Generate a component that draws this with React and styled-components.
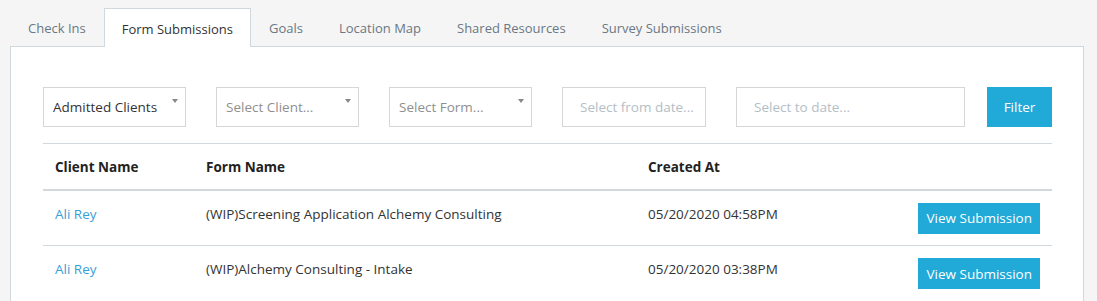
import styled, { createGlobalStyle } from 'styled-components'

const GlobalStyle = createGlobalStyle`
  html, body {
    margin: 0;
    background: #f5f5f5;
    font-family: 'Open Sans', 'Noto Sans', sans-serif;
    font-size: 13.5px;
    color: #333;
  }
`

const tabs = ['Check Ins', 'Form Submissions', 'Goals', 'Location Map', 'Shared Resources', 'Survey Submissions']

const rows = [
  { client: 'Ali Rey', form: '(WIP)Screening Application Alchemy Consulting', created: '05/20/2020 04:58PM' },
  { client: 'Ali Rey', form: '(WIP)Alchemy Consulting - Intake', created: '05/20/2020 03:38PM' },
]

const App = () => {
  return (
    <>
      <GlobalStyle />
      <Page>
        <TabBar>
          {tabs.map((t) => (
            <Tab key={t} active={t === 'Form Submissions'}>{t}</Tab>
          ))}
        </TabBar>
        <Panel>
          <Filters>
            <SelectBox width='143px' filled>Admitted Clients<Caret /></SelectBox>
            <SelectBox width='143px'>Select Client...<Caret /></SelectBox>
            <SelectBox width='143px'>Select Form...<Caret /></SelectBox>
            <DateBox width='144px'>Select from date...</DateBox>
            <DateBox width='229px'>Select to date...</DateBox>
            <FilterBtn>Filter</FilterBtn>
          </Filters>
          <Table>
            <thead>
              <tr>
                <Th width='151px'>Client Name</Th>
                <Th width='442px'>Form Name</Th>
                <Th>Created At</Th>
                <Th width='160px' />
              </tr>
            </thead>
            <tbody>
              {rows.map((r, i) => (
                <tr key={i}>
                  <Td><ClientLink>{r.client}</ClientLink></Td>
                  <Td>{r.form}</Td>
                  <Td>{r.created}</Td>
                  <Td align='right'><ViewBtn>View Submission</ViewBtn></Td>
                </tr>
              ))}
            </tbody>
          </Table>
        </Panel>
      </Page>
    </>
  )
}

export default App

const Page = styled.div`
  padding: 8px 13px 0 10px;
  height: 301px;
  box-sizing: border-box;
  overflow: hidden;
`

const TabBar = styled.div`
  display: flex;
  height: 38px;
`

const Tab = styled.div`
  display: flex;
  align-items: center;
  padding: 1px 17px 0;
  font-size: 13px;
  box-sizing: border-box;
  color: ${(p) => (p.active ? '#333' : '#6a7884')};
  background: ${(p) => (p.active ? '#fff' : 'transparent')};
  border: 1px solid ${(p) => (p.active ? '#cfd8dd' : 'transparent')};
  border-bottom: none;
  position: relative;
  z-index: 1;
  height: ${(p) => (p.active ? '39px' : '38px')};
`

const Panel = styled.div`
  background: #fff;
  border: 1px solid #cfd8dd;
  padding: 40px 31px 0 32px;
  height: 300px;
  box-sizing: border-box;
`

const Filters = styled.div`
  display: flex;
  gap: 30px;
  height: 40px;
  margin-bottom: 16px;
`

const fieldBase = `
  box-sizing: border-box;
  height: 40px;
  border: 1px solid #d6d6d6;
  display: flex;
  align-items: center;
  font-size: 13.5px;
  position: relative;
  white-space: nowrap;
`

const SelectBox = styled.div`
  ${fieldBase}
  width: ${(p) => p.width};
  padding-left: 9px;
  color: ${(p) => (p.filled ? '#333' : '#8f8f8f')};
`

const Caret = styled.span`
  position: absolute;
  right: 7px;
  top: 11px;
  width: 0;
  height: 0;
  border-left: 3.5px solid transparent;
  border-right: 3.5px solid transparent;
  border-top: 4px solid #888;
`

const DateBox = styled.div`
  ${fieldBase}
  width: ${(p) => p.width};
  padding-left: 17px;
  color: #b3bec6;
`

const FilterBtn = styled.button`
  margin-left: -8px;
  width: 65px;
  height: 40px;
  border: none;
  background: #21a9d8;
  color: #fff;
  font-family: inherit;
  font-size: 13.5px;
`

const Table = styled.table`
  width: 1009px;
  table-layout: fixed;
  border-collapse: collapse;
  border-top: 1px solid #d2d9de;
  font-size: 13.5px;

  tbody tr {
    border-top: 1px solid #d2d9de;
    height: 56px;
  }
  tbody tr:first-child {
    border-top: 2px solid #d2d9de;
  }
`

const Th = styled.th`
  box-sizing: border-box;
  text-align: left;
  font-weight: 700;
  color: #222;
  padding: 1px 12px 0;
  height: 46px;
  width: ${(p) => p.width || 'auto'};
`

const Td = styled.td`
  padding: 13px 12px 0;
  text-align: ${(p) => p.align || 'left'};
  vertical-align: top;
  line-height: 20px;
  color: #333;
`

const ClientLink = styled.a`
  color: #3a9fd6;
  text-decoration: none;
`

const ViewBtn = styled.button`
  background: #21a9d8;
  color: #fff;
  border: none;
  height: 31px;
  padding: 0 8px;
  font-family: inherit;
  font-size: 13.5px;
  margin-top: -1px;
`
